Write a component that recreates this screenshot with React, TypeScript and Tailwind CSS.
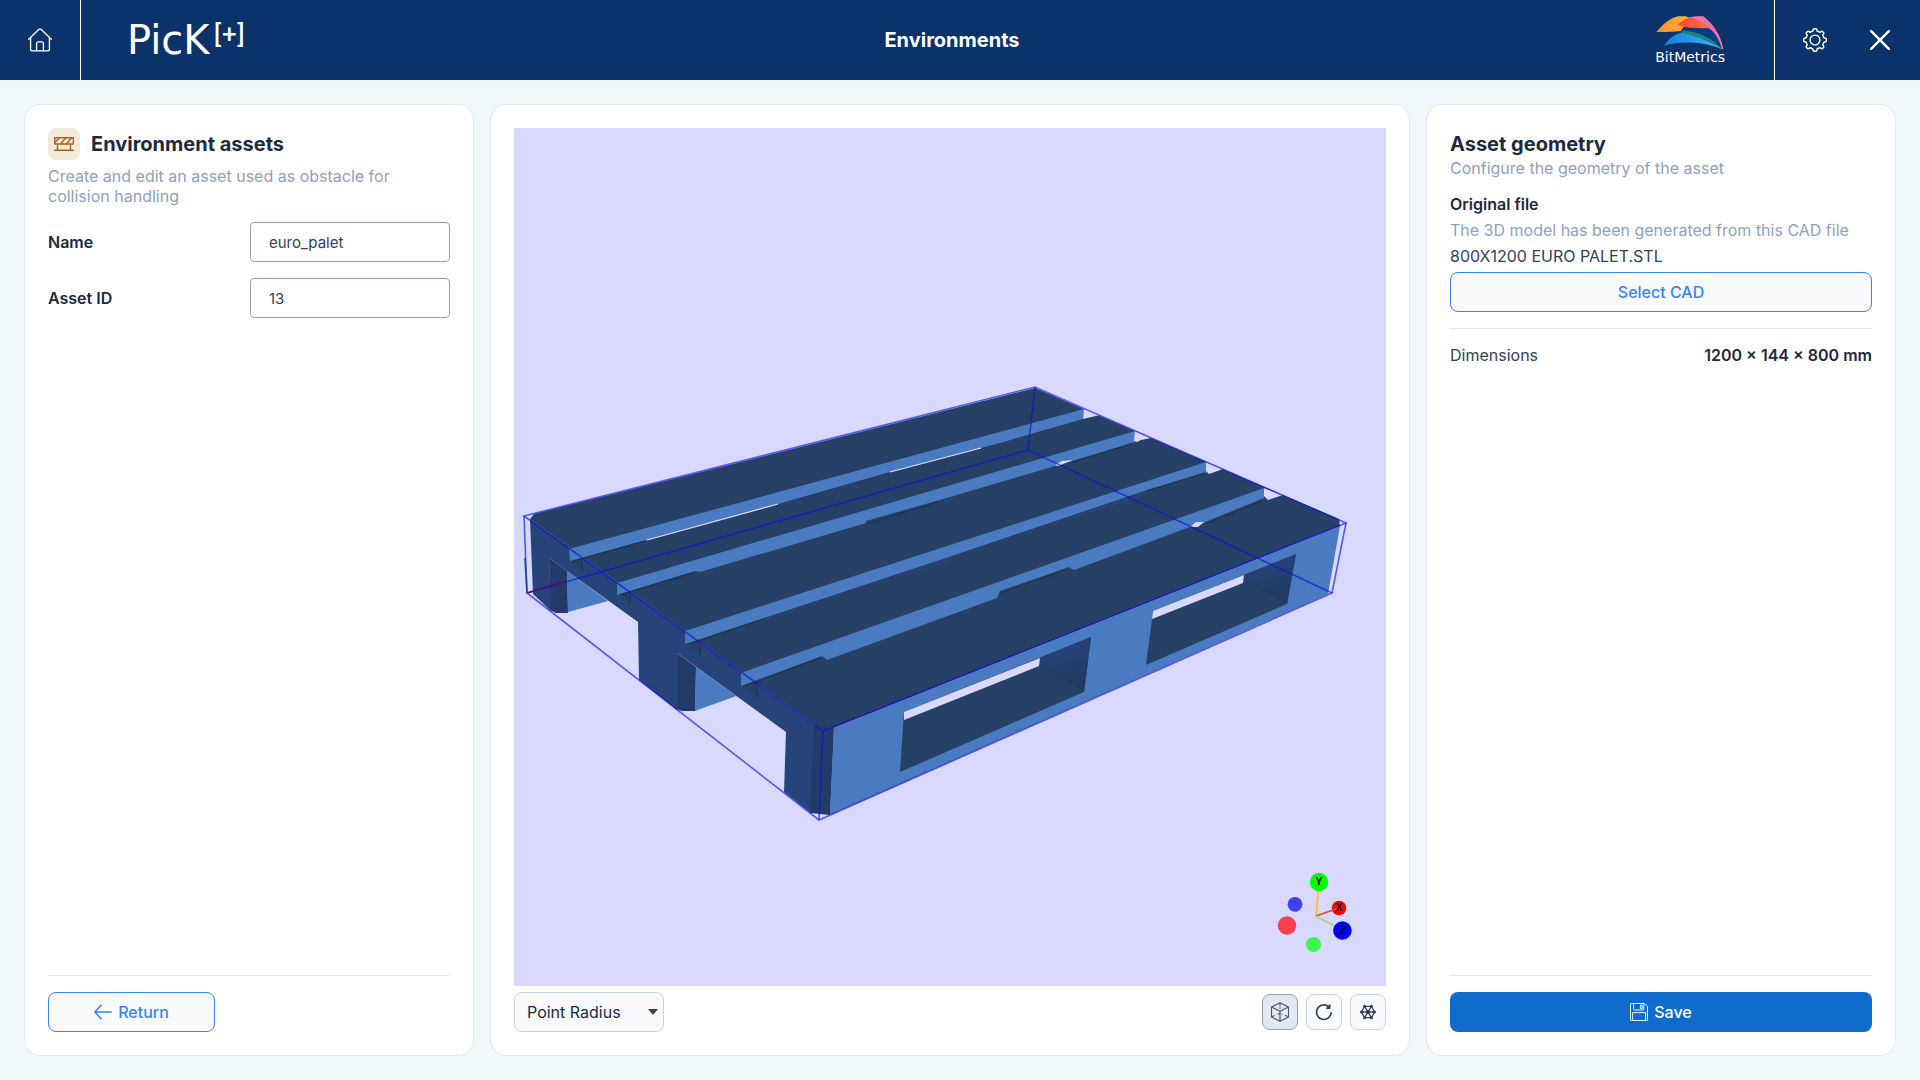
import type { ReactNode } from "react";

const panel = "flex min-h-0 min-w-0 flex-col rounded-2xl bg-white p-6 ring-1 ring-inset ring-slate-200";
const outlineButton =
  "flex h-10 items-center justify-center gap-1.5 rounded-lg border border-[#3b82f6] bg-slate-50 text-base font-medium text-[#3b82f6]";

function HomeIcon() {
  return (
    <svg width="24" height="24" viewBox="0 0 24 24" fill="none" stroke="currentColor" strokeWidth="1.3" strokeLinecap="round" strokeLinejoin="round">
      <path d="M0.7 11.3 10.7 1.5a1.9 1.9 0 0 1 2.6 0l10 9.8" />
      <path d="M2.6 9.6v12.2a1.1 1.1 0 0 0 1.1 1.1h16.6a1.1 1.1 0 0 0 1.1-1.1V9.6" />
      <path d="M8.6 22.8v-7a2 2 0 0 1 2-2h2.8a2 2 0 0 1 2 2v7" />
    </svg>
  );
}

function GearIcon() {
  return (
    <svg width="24" height="24" viewBox="0 0 24 24" fill="none" stroke="currentColor" strokeWidth="1.4" strokeLinejoin="round">
      <circle cx="12" cy="12" r="4.9" />
      <path d="M9.9 3.1 10.2 1.4Q10.4 0.7 11.1 0.7H12.9Q13.6 0.7 13.8 1.4L14.1 3.1Q15.7 3.7 16.8 4.3L18.3 3.3Q18.9 2.9 19.4 3.4L20.6 4.6Q21.1 5.1 20.7 5.7L19.7 7.2Q20.4 8.4 20.9 9.9L22.6 10.2Q23.3 10.4 23.3 11.1V12.9Q23.3 13.6 22.6 13.8L20.9 14.1Q20.4 15.6 19.7 16.8L20.7 18.3Q21.1 18.9 20.6 19.4L19.4 20.6Q18.9 21.1 18.3 20.7L16.8 19.7Q15.6 20.4 14.1 20.9L13.8 22.6Q13.6 23.3 12.9 23.3H11.1Q10.4 23.3 10.2 22.6L9.9 20.9Q8.4 20.4 7.2 19.7L5.7 20.7Q5.1 21.1 4.6 20.6L3.4 19.4Q2.9 18.9 3.3 18.3L4.3 16.8Q3.6 15.6 3.1 14.1L1.4 13.8Q0.7 13.6 0.7 12.9V11.1Q0.7 10.4 1.4 10.2L3.1 9.9Q3.6 8.4 4.3 7.2L3.3 5.7Q2.9 5.1 3.4 4.6L4.6 3.4Q5.1 2.9 5.7 3.3L7.2 4.3Q8.4 3.6 9.9 3.1Z" />
    </svg>
  );
}

function CloseIcon() {
  return (
    <svg width="20" height="20" viewBox="0 0 20 20" fill="none" stroke="currentColor" strokeWidth="2.4" strokeLinecap="round">
      <path d="M1.2 1.2 18.8 18.8M18.8 1.2 1.2 18.8" />
    </svg>
  );
}

function BarrierIcon() {
  return (
    <svg width="20" height="14" viewBox="0 0 20 14" fill="none" stroke="currentColor" strokeWidth="1.4" strokeLinecap="round" strokeLinejoin="round">
      <path d="M0.7 0.7H19.3V7H0.7ZM3.5 7V13.2M16.5 7V13.2M0.7 13.2H19.3" />
      <path d="M1 5.2 5.6 0.8M6.6 6.8 11.8 0.8M12.6 6.8 17.6 0.8" />
    </svg>
  );
}

function WingMark() {
  return (
    <svg width="68" height="34" viewBox="166 50 204 102">
      <defs>
        <linearGradient id="wing-orange" x1="0" x2="1">
          <stop offset="0" stopColor="#ff8a2b" />
          <stop offset="1" stopColor="#ffb638" />
        </linearGradient>
        <linearGradient id="wing-red" x1="0" x2="1">
          <stop offset="0" stopColor="#ff4a2f" />
          <stop offset="1" stopColor="#ff6b3d" />
        </linearGradient>
        <linearGradient id="wing-blue" x1="0" x2="1">
          <stop offset="0" stopColor="#0f7fe0" />
          <stop offset="1" stopColor="#4fb0f5" />
        </linearGradient>
        <linearGradient id="wing-navy" x1="0" x2="1">
          <stop offset="0" stopColor="#0b3a80" />
          <stop offset="1" stopColor="#04388c" />
        </linearGradient>
      </defs>
      <path d="M245 93C275 86 305 85 326 87C345 105 358 128 366 150C335 115 290 100 245 93Z" fill="url(#wing-navy)" />
      <path d="M167 98C190 70 212 56 232 51H255L268 56L240 95C215 97 190 99 167 98Z" fill="url(#wing-orange)" />
      <path d="M262 56C272 52 285 50 308 51C340 75 362 112 368 150H364C355 120 345 102 326 87C305 72 285 60 262 56Z" fill="#f86fae" />
      <path d="M231 76Q248 60 266 55C292 59 312 73 327 87C300 85 255 89 231 76Z" fill="url(#wing-red)" />
      <path d="M190 139C204 117 222 104 243 100C290 103 335 120 366 151C310 125 240 125 190 139Z" fill="url(#wing-blue)" />
      <path d="M240 100L247 93C295 99 338 118 364 149C330 128 298 113 240 100Z" fill="#0e8a80" />
    </svg>
  );
}

function Edge({ d }: { d: string }) {
  return <path d={d} fill="none" stroke="#1010dc" strokeWidth="1.6" strokeOpacity="0.64" />;
}

const TOP = "#274166";
const SIDE = "#264479";
const LIT = "#4a7abf";
const DEEP = "#243b69";
const SKY = "#d9d9ff";

function PalletScene() {
  return (
    <svg className="min-h-0 w-full flex-1 bg-[#d9d9ff]" viewBox="514 128 872 858" role="img" aria-label="3D model of the pallet">
      <defs>
        <linearGradient id="shade" x1="0" y1="0" x2="0.3" y2="1">
          <stop offset="0.3" stopColor="#274279" />
          <stop offset="1" stopColor="#223a60" />
        </linearGradient>
      </defs>
      <path fill={TOP} d="M530 519 534 514 1035 388 1339 519 1340 526 834 728 818 727Z" />
      <path fill={LIT} d="M834 728 1340 526 1328 594 830 815Z" />
      <path fill={LIT} d="M567 571 608 601 568 612ZM696 667 736 696 695 711Z" />
      <path fill={DEEP} d="M549 558 567 571 568 613H556L550 610ZM677 653 696 667 695 711H682L676 709Z" />
      <path fill={SIDE} d="M530 519 823 731 811 813 784 792 786 732 677 653 677 710 639 680 638 622 549 558 551 611 533 594Z" />
      <path fill={DEEP} d="M814 725 834 728 830 815 810 813Z" />
      <path fill={TOP} d="M569 560 583 571V558ZM617 594 631 604V591ZM685 643 701 656V639ZM741 685 758 697V680Z" />
      <path fill="none" stroke="#20385a" strokeWidth="2" d="M582 562V570M630 595V604M700 646V656M757 688V697" />

      <path fill={LIT} d="M569 549 1084 409 1083 419 1000 443 950 456 890 472 778 504 647 540 570 561Z" />
      <path fill={LIT} d="M617 583 1135 431V442L1072 461 943 499 866 521V523L700 572 695 571 617 595Z" />
      <path fill={LIT} d="M685 631 1206 462V473L1147 490 940 560 764 618 685 644Z" />
      <path fill={LIT} d="M741 673 1264 488V498L1203 523 1190 527 1074 570 1069 567 1000 591 997 598 827 660 822 656 741 686Z" />
      <path fill={SKY} d="M1084 408 1100 415 1083 419ZM1135 431 1151 438 1141 440 1137 442 1134 441ZM1206 462 1223 469 1209 474 1206 471ZM1264 488 1283 495 1268 500 1264 496Z" />
      <path fill="none" stroke="#e2e2f8" strokeWidth="1.2" d="M647 540 778 504M890 472 981 448" />
      <path fill={SKY} d="M1055 465 1062 461 1073 460 1058 466ZM1190 527 1196 522 1204 522 1198 527Z" />
      <path fill="none" stroke="#213752" strokeWidth="1.5" d="M571 562 645 541M620 595 693 573M867 524 938 502M690 644 764 619M1147 491 1205 473M745 686 820 658M1001 593 1068 569M1205 524 1262 501M1073 462 1132 444" />
      <path fill="none" stroke="#274279" strokeWidth="3" d="M893 577 950 559M1075 516 1140 496" />

      <path fill={TOP} d="M904 712 1091 637 1084 692 900 772Z" />
      <path fill="url(#shade)" d="M1040 658 1091 637 1084 692 1038 666Z" />
      <path fill={SKY} d="M904 712 1040 658 1039 666 904 720Z" />
      <path fill={TOP} d="M1153 611 1296 554 1287 604 1146 665Z" />
      <path fill="url(#shade)" d="M1243 576 1296 554 1287 604 1243 582Z" />
      <path fill={SKY} d="M1153 611 1244 575 1243 583 1152 619Z" />

      <Edge d="M524 516 1035 387 1346 523 823 731Z" />
      <Edge d="M527 593 1028 450 1332 593 819 820Z" />
      <Edge d="M524 516 527 593M1035 387 1028 450M1346 523 1332 593M823 731 819 820" />
      <path d="M527 593 563 582" stroke="#5a0a80" strokeWidth="1.6" />
      <path d="M525 558 527 593" stroke="#244a80" strokeWidth="1.6" />

      <g strokeWidth="1.8" strokeLinecap="round">
        <path d="M1316 916 1319 884" stroke="#ffbf1f" />
        <circle cx="1339" cy="908" r="7.3" fill="#ff0000" />
        <path d="M1316 916 1336 909" stroke="#d94a45" />
        <path d="M1316 916 1338 928" stroke="#a6cc8c" />
      </g>
      <circle cx="1319" cy="882" r="9.2" fill="#00ff00" />
      <circle cx="1342.4" cy="930.5" r="9.3" fill="#0000ff" />
      <circle cx="1295" cy="904.3" r="7.4" fill="#4040ff" />
      <circle cx="1287" cy="925.5" r="9.2" fill="#f6404c" />
      <circle cx="1313.5" cy="944.5" r="7.6" fill="#40f550" />
      <g fontFamily="Liberation Sans, sans-serif" fontWeight="700" textAnchor="middle" fill="#000">
        <text x="1319" y="885" fontSize="11">Y</text>
        <text x="1339" y="911" fontSize="10">X</text>
        <text x="1343" y="934" fontSize="11">Z</text>
      </g>
    </svg>
  );
}

function ToolButton({ label, active, children }: { label: string; active?: boolean; children: ReactNode }) {
  return (
    <button
      type="button"
      aria-label={label}
      className={
        active
          ? "flex size-9 items-center justify-center rounded-lg border border-slate-400 bg-slate-200 text-slate-600"
          : "flex size-9 items-center justify-center rounded-lg border border-slate-300 bg-slate-50 text-slate-700"
      }
    >
      {children}
    </button>
  );
}

function Field({ id, label, value }: { id: string; label: string; value: string }) {
  return (
    <div className="flex items-center justify-between">
      <label htmlFor={id} className="text-base font-semibold text-slate-800">
        {label}
      </label>
      <input
        id={id}
        defaultValue={value}
        className="h-10 w-[200px] rounded border border-slate-400 bg-white px-[18px] text-[15px] text-slate-700"
      />
    </div>
  );
}

export default function App() {
  return (
    <div className="flex h-screen flex-col bg-[#f0f8fc] font-[Inter,sans-serif] text-slate-800">
      <header className="grid h-20 shrink-0 grid-cols-[1fr_auto_1fr] items-center bg-[#0b326b] text-white">
        <div className="flex h-full items-center">
          <button type="button" aria-label="Home" className="flex h-full w-[81px] items-center justify-center border-r border-white">
            <HomeIcon />
          </button>
          <div className="flex items-start gap-1 pl-[46px] leading-none">
            <span className="font-['DejaVu_Sans',sans-serif] text-[40px]">PicK</span>
            <span className="font-[Lato,sans-serif] text-[26px] font-bold">[+]</span>
          </div>
        </div>
        <h1 className="pr-4 text-xl font-bold">Environments</h1>
        <div className="flex h-full items-center justify-end">
          <div className="flex flex-col items-center pr-[49px]">
            <WingMark />
            <span className="font-['DejaVu_Sans',sans-serif] text-sm leading-3.5">BitMetrics</span>
          </div>
          <div className="flex h-full items-center gap-[43px] border-l border-white pr-[30px] pl-7">
            <button type="button" aria-label="Settings">
              <GearIcon />
            </button>
            <button type="button" aria-label="Close">
              <CloseIcon />
            </button>
          </div>
        </div>
      </header>

      <main className="grid min-h-0 flex-1 grid-cols-[45fr_92fr_47fr] gap-4 p-6">
        <section className={panel}>
          <div className="flex items-center gap-[11px]">
            <span className="flex size-8 items-center justify-center rounded-lg bg-[#f0ebd9] text-[#a8641a]">
              <BarrierIcon />
            </span>
            <h2 className="text-xl font-bold">Environment assets</h2>
          </div>
          <p className="mt-1.5 leading-5 text-slate-400">Create and edit an asset used as obstacle for collision handling</p>
          <div className="mt-4 flex flex-col gap-4">
            <Field id="asset-name" label="Name" value="euro_palet" />
            <Field id="asset-id" label="Asset ID" value="13" />
          </div>
          <div className="mt-auto border-t border-slate-200 pt-4">
            <button type="button" className={`${outlineButton} w-[167px]`}>
              <svg width="18" height="16" viewBox="0 0 18 16" fill="none" stroke="currentColor" strokeWidth="1.6" strokeLinecap="round" strokeLinejoin="round">
                <path d="M7 1.2 0.9 8 7 14.8M1 8H17.2" />
              </svg>
              Return
            </button>
          </div>
        </section>

        <section className={panel}>
          <PalletScene />
          <div className="mt-1.5 flex items-center justify-between">
            <div className="relative">
              <select
                aria-label="Display option"
                className="h-10 w-[150px] appearance-none rounded-lg border border-slate-300 bg-slate-50 pl-3 text-base text-slate-800"
              >
                <option>Point Radius</option>
              </select>
              <svg className="pointer-events-none absolute top-[17px] right-1.5" width="10" height="6" viewBox="0 0 10 6">
                <path d="M0 0H10L5 6Z" fill="#334155" />
              </svg>
            </div>
            <div className="flex gap-2">
              <ToolButton label="Perspective" active>
                <svg width="20" height="20" viewBox="0 0 20 20" fill="none" stroke="currentColor" strokeWidth="1.1" strokeLinejoin="round">
                  <path d="M10 0.8 18.5 5V15L10 19.2 1.5 15V5ZM1.5 5 10 9.2 18.5 5M10 9.2V19.2" />
                  <path d="M10 1V7M1.8 14.8 5 13.3M7.5 12.3 10 11.5 12.5 12.3M15 13.3 18.2 14.8" strokeDasharray="3 1.2" />
                </svg>
              </ToolButton>
              <ToolButton label="Reset view">
                <svg width="18" height="18" viewBox="0 0 18 18" fill="none" stroke="currentColor" strokeWidth="1.7">
                  <path d="M16.2 9.2A7.3 7.3 0 1 1 13.6 3.6" />
                  <path d="M15 1.6V5.4H11.2Z" fill="currentColor" strokeWidth="1" strokeLinejoin="round" />
                </svg>
              </ToolButton>
              <ToolButton label="Mesh">
                <svg width="16" height="16" viewBox="0 0 16 16" fill="none" stroke="currentColor" strokeWidth="1.3">
                  <path d="M4.6 2.3H11.4L14.6 8 11.4 13.7H4.6L1.4 8ZM1.4 8H14.6M4.6 2.3 11.4 13.7M11.4 2.3 4.6 13.7" />
                  <g fill="currentColor" stroke="none">
                    <circle cx="4.6" cy="2.3" r="1.5" />
                    <circle cx="11.4" cy="2.3" r="1.5" />
                    <circle cx="14.5" cy="8" r="1.5" />
                    <circle cx="11.4" cy="13.7" r="1.5" />
                    <circle cx="4.6" cy="13.7" r="1.5" />
                    <circle cx="1.5" cy="8" r="1.5" />
                    <circle cx="8" cy="8" r="2" />
                  </g>
                </svg>
              </ToolButton>
            </div>
          </div>
        </section>

        <section className={panel}>
          <h2 className="text-xl leading-8 font-bold">Asset geometry</h2>
          <p className="leading-4 text-slate-400">Configure the geometry of the asset</p>
          <h3 className="mt-4 leading-6 font-semibold">Original file</h3>
          <p className="mt-0.5 leading-6 text-slate-400">The 3D model has been generated from this CAD file</p>
          <p className="mt-0.5 leading-6 text-slate-700">800X1200 EURO PALET.STL</p>
          <button type="button" className={`${outlineButton} mt-1 w-full shrink-0`}>
            Select CAD
          </button>
          <dl className="mt-4 flex justify-between border-t border-slate-200 pt-3.5">
            <dt className="text-slate-700">Dimensions</dt>
            <dd className="font-semibold">1200 × 144 × 800 mm</dd>
          </dl>
          <div className="mt-auto border-t border-slate-200 pt-4">
            <button
              type="button"
              className="flex h-10 w-full items-center justify-center gap-1.5 rounded-lg bg-[#0f6ccb] text-base font-medium text-white"
            >
              <svg width="18" height="18" viewBox="0 0 18 18" fill="none" stroke="currentColor" strokeWidth="0.9" strokeLinejoin="round">
                <path d="M1.2 0.5H14.6L17.5 3.4V16.8Q17.5 17.5 16.8 17.5H1.2Q0.5 17.5 0.5 16.8V1.2Q0.5 0.5 1.2 0.5Z" />
                <path d="M3.6 0.5V6.2Q3.6 7 4.4 7H13Q13.8 7 13.8 6.2V0.5M10.4 2.2H12.2V5.4H10.4ZM2.6 17.5V9.6H15.6V17.5" />
              </svg>
              Save
            </button>
          </div>
        </section>
      </main>
    </div>
  );
}
